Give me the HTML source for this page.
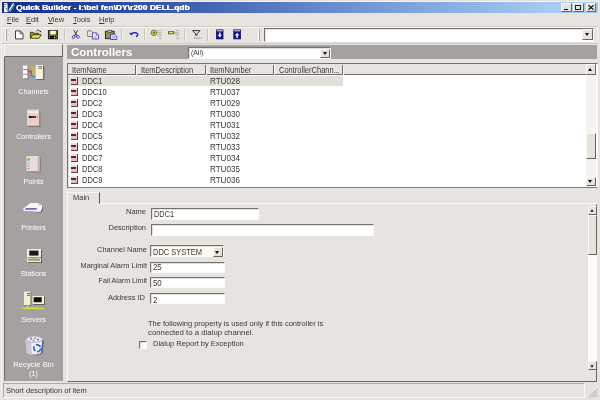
<!DOCTYPE html>
<html><head><meta charset="utf-8">
<style>
html,body{margin:0;padding:0;}
body{width:600px;height:400px;overflow:hidden;background:#e7e4df;position:relative;font-family:"Liberation Sans",sans-serif;font-size:7.9px;color:#383838;}
.a{position:absolute;}
.t{position:absolute;white-space:nowrap;line-height:10px;transform-origin:0 50%;transform:scaleX(.949);}
.sunk{position:absolute;background:#fff;box-sizing:border-box;border:1px solid;border-color:#75736e #fbfaf8 #fbfaf8 #75736e;box-shadow:inset 1px 1px 0 rgba(0,0,0,.12);}
.btn{position:absolute;background:#e6e3dd;box-sizing:border-box;border:1px solid;border-color:#fbfaf8 #66645f #66645f #fbfaf8;}
.arr{position:absolute;width:0;height:0;border-left:2.5px solid transparent;border-right:2.5px solid transparent;border-top:3px solid #111;}
.sep{position:absolute;width:1px;height:12px;top:29px;background:#c6c3bd;box-shadow:1px 0 0 #f7f6f3;}
.lbl{position:absolute;white-space:nowrap;line-height:10px;text-align:right;width:90px;transform-origin:100% 50%;transform:scaleX(.949);}
.row{position:absolute;left:82.2px;white-space:nowrap;line-height:10px;font-size:8.7px;transform-origin:0 50%;transform:scaleX(.865);}
.num{position:absolute;left:209.5px;white-space:nowrap;line-height:10px;font-size:8.7px;transform-origin:0 50%;transform:scaleX(.93);}
.ri{position:absolute;left:71.2px;width:7.3px;height:7.8px;background:linear-gradient(#f6e2de,#f0ccca 45%,#eab0bc);border-right:1px solid #4a3e3e;border-bottom:0.9px solid #5c4a4a;box-sizing:border-box;}
.ri:after{content:"";position:absolute;left:0.2px;width:5px;top:2.4px;height:1.5px;background:#45321c;}
.side{position:absolute;left:4px;width:59px;text-align:center;color:#fff;font-size:7.9px;line-height:10px;white-space:nowrap;transform:scaleX(.91);}
</style></head><body>
<div id="w" style="position:absolute;left:0;top:0;width:600px;height:400px;will-change:transform;filter:blur(0.3px);">

<!-- title bar -->
<div class="a" style="left:2.3px;top:2px;width:595.5px;height:10.7px;background:linear-gradient(90deg,#0e2c8e 0%,#3c5cb0 30%,#7299d6 62%,#a6caf0 92%,#a8ccf1 100%);"></div>
<svg class="a" style="left:3px;top:2px" width="13" height="11" viewBox="3 2 13 11"><rect x="4" y="3" width="3.6" height="9.3" fill="#f4f4f4"/><path d="M4.3 4.6h2M4.3 6.6h1.4M5.6 8.8h1.6" stroke="#444" stroke-width="0.8"/><path d="M7.6 3l2.2 3.2" stroke="#222a50" stroke-width="1.2"/><path d="M8.4 11.4l5.2-8" stroke="#e8f4f4" stroke-width="1.6"/><path d="M9.8 12l4.6-7" stroke="#38b8b0" stroke-width="1.2"/><path d="M8 9.6l1.6 2.2" stroke="#222" stroke-width="0.9"/></svg>
<div class="t" style="left:16.3px;top:2.7px;color:#fff;font-weight:bold;font-size:7.8px;transform:scaleX(1.086);text-shadow:0.3px 0 0 #fff;">Quick Builder - I:\bei fen\DY\r200 DELL.qdb</div>
<!-- caption buttons -->
<div class="btn" style="left:561.2px;top:3px;width:11.2px;height:8.6px;"></div>
<div class="a" style="left:563.7px;top:8.6px;width:4.2px;height:1.3px;background:#111;"></div>
<div class="btn" style="left:572.6px;top:3px;width:11.2px;height:8.6px;"></div>
<div class="a" style="left:575px;top:4.5px;width:6px;height:5.2px;border:0.7px solid #222;border-top-width:1.4px;box-sizing:border-box;"></div>
<div class="btn" style="left:585.6px;top:3px;width:10.8px;height:8.6px;"></div>
<svg class="a" style="left:587.9px;top:4.8px" width="6" height="5" viewBox="0 0 6 5"><path d="M0.5 0.3L5.5 4.7M5.5 0.3L0.5 4.7" stroke="#111" stroke-width="1.2"/></svg>

<div class="a" style="left:1px;top:1px;width:598px;height:1px;background:#f3f2ef;"></div>
<div class="a" style="left:1px;top:1px;width:1px;height:398px;background:#f3f2ef;"></div>
<div class="a" style="left:596.5px;top:27px;width:1px;height:15.5px;background:#f5f4f1;"></div>
<!-- menu -->
<div class="t" style="left:6.5px;top:14.5px;"><u>F</u>ile</div>
<div class="t" style="left:26px;top:14.5px;"><u>E</u>dit</div>
<div class="t" style="left:47.5px;top:14.5px;"><u>V</u>iew</div>
<div class="t" style="left:72.5px;top:14.5px;"><u>T</u>ools</div>
<div class="t" style="left:98.5px;top:14.5px;"><u>H</u>elp</div>
<div class="a" style="left:2px;top:26px;width:596px;height:1px;background:#d2cfc9;box-shadow:0 1px 0 #f7f6f3;"></div>

<!-- toolbar -->
<div class="a" style="left:5px;top:29px;width:1px;height:12px;background:#fbfaf8;box-shadow:1px 0 0 #a9a6a0;"></div>
<!-- toolbar icons -->
<svg class="a" style="left:0;top:26px" width="260" height="18" viewBox="0 26 260 18">
<!-- new -->
<path d="M15.5 30.9h4.7l2.8 2.6v5.4h-7.5z" fill="#fff" stroke="#2a2a2a" stroke-width="0.9"/><path d="M20 31.1v2.6h2.8" fill="none" stroke="#2a2a2a" stroke-width="0.7"/>
<!-- open -->
<path d="M30.4 38.3v-6h2.8l0.9 1h4.6v1.5" fill="#a09c10" stroke="#2a2a08" stroke-width="0.8"/>
<path d="M30.4 38.3l2.2-3.6h8.8l-2.4 3.6z" fill="#e2de48" stroke="#2a2a08" stroke-width="0.8"/>
<path d="M36.2 31.2c1-1.3 2.9-1.3 3.6-0.1" fill="none" stroke="#222" stroke-width="0.8"/><rect x="39.8" y="31" width="1.2" height="1.2" fill="#111"/>
<!-- save -->
<rect x="48.4" y="30.6" width="9" height="8.2" fill="#6a6a08" stroke="#1a1a06" stroke-width="0.9"/>
<rect x="50.2" y="30.8" width="5.6" height="3.6" fill="#f6f6f2"/>
<rect x="50" y="36" width="5.6" height="2.9" fill="#0c0c0c"/><rect x="54" y="36.8" width="1" height="1.6" fill="#e8e8e8"/>
<!-- cut -->
<path d="M73.8 30.3l3.2 5.6M77.6 30.3l-3.2 5.6" stroke="#222" stroke-width="0.9" fill="none"/>
<path d="M74.6 35.4l-1.8 0.6l-0.8 1.8l1.4 0.8l1.6-1z" fill="none" stroke="#3434c4" stroke-width="0.9"/>
<path d="M76.8 35.4l1.8 0.2l1 1.6l-1.4 1l-1.7-0.8z" fill="none" stroke="#3434c4" stroke-width="0.9"/>
<!-- copy -->
<path d="M87.7 30.9h3.4l1.5 1.5v4h-4.9z" fill="#fff" stroke="#555" stroke-width="0.8"/>
<path d="M92.4 32.9h4l2.2 2.1v4h-6.2z" fill="#fff" stroke="#2a2ab4" stroke-width="0.8"/>
<path d="M96.2 33.1v2.1h2.2" fill="none" stroke="#2a2ab4" stroke-width="0.6"/>
<path d="M89 33.3h2M89 35h2" stroke="#888" stroke-width="0.5"/><path d="M93.6 36h3.6M93.6 37.6h3.6" stroke="#667" stroke-width="0.5"/>
<!-- paste -->
<rect x="105.4" y="31.3" width="8.8" height="7.4" fill="#94923a" stroke="#222" stroke-width="0.9"/>
<rect x="107.8" y="30.2" width="4" height="2" fill="#d0cdc6" stroke="#333" stroke-width="0.6"/>
<path d="M110.6 34.3h4l2.2 2v3.2h-6.2z" fill="#eef0ff" stroke="#2a2ab4" stroke-width="0.8"/>
<path d="M111.8 36.6h3.6M111.8 38h3.6" stroke="#5a68b0" stroke-width="0.6"/>
<!-- undo -->
<path d="M131.5 34.2c1.2-1.8 4.6-2.2 5.8-0.6c0.9 1.2 0.2 2.6-1.2 3" fill="none" stroke="#1a1ac8" stroke-width="1.4"/>
<path d="M128.9 33l3.2-0.3l-0.3 3.1z" fill="#1a1ac8"/>
<!-- add -->
<path d="M157.6 30.7h4M156.4 32.8h5.2M157.6 34.8h4M158.8 38.6h2.8" stroke="#a9a6a1" stroke-width="0.9"/><path d="M158.8 36.7h2.8" stroke="#c4c1bc" stroke-width="0.8"/>
<circle cx="153.9" cy="32.8" r="2.7" fill="#ecea48" stroke="#3a3a10" stroke-width="0.7"/>
<path d="M152.5 32.8h2.8M153.9 31.4v2.8" stroke="#3a3a10" stroke-width="0.7"/>
<!-- remove -->
<path d="M175.4 30.7h3.8M174 32.8h5.2M175.4 34.8h3.8M176.4 38.6h2.8" stroke="#a9a6a1" stroke-width="0.9"/><path d="M176.4 36.7h2.8" stroke="#c4c1bc" stroke-width="0.8"/>
<rect x="168.6" y="31.7" width="5.2" height="2.1" fill="#ecea48" stroke="#3a3a10" stroke-width="0.7"/>
<!-- filter -->
<path d="M192.6 30.6h7.4l-2.8 3v1.6h-1.8v-1.6z" fill="#dfe3ea" stroke="#222" stroke-width="0.9"/>
<path d="M194 38h8" stroke="#777" stroke-width="1" stroke-dasharray="1 0.7"/>
<!-- down -->
<rect x="216.6" y="29.9" width="6.4" height="9" fill="#0c0ca4" stroke="#101040" stroke-width="0.8"/>
<rect x="217" y="30.3" width="5.6" height="1" fill="#e8e8f4"/>
<path d="M219.1 32.6h1.4v2.2h1.5l-2.2 2.6l-2.2-2.6h1.5z" fill="#fff"/>
<!-- up -->
<rect x="233.8" y="29.9" width="6.6" height="9" fill="#0c0ca4" stroke="#101040" stroke-width="0.8"/>
<rect x="234.2" y="30.3" width="5.8" height="1" fill="#e8e8f4"/>
<path d="M236.4 38h1.4v-2.6h1.5l-2.2-2.6l-2.2 2.6h1.5z" fill="#fff"/>
</svg>
<div class="sep" style="left:64px;"></div>
<div class="sep" style="left:121px;"></div>
<div class="sep" style="left:144px;"></div>
<div class="sep" style="left:184px;"></div>
<div class="sep" style="left:207px;"></div>
<div class="a" style="left:258px;top:29px;width:1px;height:12px;background:#fbfaf8;box-shadow:1px 0 0 #a9a6a0;"></div>
<div class="sunk" style="left:264px;top:27.6px;width:330px;height:14px;"></div>
<div class="btn" style="left:582.2px;top:28.8px;width:10.5px;height:11.2px;"></div>
<div class="arr" style="left:584.9px;top:33px;"></div>
<div class="a" style="left:2px;top:43px;width:596px;height:1px;background:#cdcac4;"></div>

<!-- left panel -->
<div class="a" style="left:4px;top:44px;width:59px;height:336.7px;background:#a4a1a0;border-left:1px solid #6f6d6a;box-sizing:border-box;"></div>
<div class="btn" style="left:4px;top:44px;width:59px;height:12.5px;background:#e7e4df;"></div>

<!-- banner -->
<div class="a" style="left:67px;top:44.7px;width:530px;height:14.3px;background:#a4a1a0;"></div>
<div class="t" style="transform:none;left:71px;top:45.5px;font-size:11.5px;font-weight:bold;color:#fff;line-height:12px;">Controllers</div>
<div class="sunk" style="left:187.7px;top:46.8px;width:143.5px;height:12.4px;"></div>
<div class="t" style="left:190.7px;top:48.2px;font-size:7.8px;transform:scaleX(.88);">(All)</div>
<div class="btn" style="left:320px;top:48.5px;width:10px;height:9px;"></div>
<div class="arr" style="left:322.5px;top:51.7px;"></div>

<!-- list -->
<div class="sunk" style="left:67px;top:63px;width:530.5px;height:124.7px;border-bottom-color:#807e7a;"></div>
<div class="a" style="left:68px;top:64px;width:518px;height:10.7px;background:#e7e4df;border-bottom:1px solid #6a6864;box-sizing:border-box;"></div>
<div class="a" style="left:134.5px;top:64.5px;width:1px;height:10px;background:#6a6864;box-shadow:1px 0 0 #fbfaf8;"></div>
<div class="a" style="left:204.5px;top:64.5px;width:1px;height:10px;background:#6a6864;box-shadow:1px 0 0 #fbfaf8;"></div>
<div class="a" style="left:273px;top:64.5px;width:1px;height:10px;background:#6a6864;box-shadow:1px 0 0 #fbfaf8;"></div>
<div class="a" style="left:342px;top:64.5px;width:1px;height:10px;background:#6a6864;box-shadow:1px 0 0 #fbfaf8;"></div>
<div class="t" style="left:71.5px;top:65px;font-size:8.3px;transform:scaleX(.905);">ItemName</div>
<div class="t" style="left:140.5px;top:65px;font-size:8.3px;transform:scaleX(.905);">ItemDescription</div>
<div class="t" style="left:210px;top:65px;font-size:8.3px;transform:scaleX(.905);">ItemNumber</div>
<div class="t" style="left:279px;top:65px;font-size:8.3px;transform:scaleX(.905);">ControllerChann...</div>
<div class="a" style="left:69px;top:75.7px;width:274px;height:10.3px;background:#e3e0da;"></div>

<div class="ri" style="top:77.1px"></div><div class="row" style="top:76.0px">DDC1</div><div class="num" style="top:76.0px">RTU028</div>
<div class="ri" style="top:88.1px"></div><div class="row" style="top:87.0px">DDC10</div><div class="num" style="top:87.0px">RTU037</div>
<div class="ri" style="top:99.1px"></div><div class="row" style="top:98.0px">DDC2</div><div class="num" style="top:98.0px">RTU029</div>
<div class="ri" style="top:110.1px"></div><div class="row" style="top:109.0px">DDC3</div><div class="num" style="top:109.0px">RTU030</div>
<div class="ri" style="top:121.1px"></div><div class="row" style="top:120.0px">DDC4</div><div class="num" style="top:120.0px">RTU031</div>
<div class="ri" style="top:132.1px"></div><div class="row" style="top:131.0px">DDC5</div><div class="num" style="top:131.0px">RTU032</div>
<div class="ri" style="top:143.1px"></div><div class="row" style="top:142.0px">DDC6</div><div class="num" style="top:142.0px">RTU033</div>
<div class="ri" style="top:154.1px"></div><div class="row" style="top:153.0px">DDC7</div><div class="num" style="top:153.0px">RTU034</div>
<div class="ri" style="top:165.1px"></div><div class="row" style="top:164.0px">DDC8</div><div class="num" style="top:164.0px">RTU035</div>
<div class="ri" style="top:176.1px"></div><div class="row" style="top:175.0px">DDC9</div><div class="num" style="top:175.0px">RTU036</div>

<!-- list scrollbar -->
<div class="a" style="left:585.5px;top:64px;width:10.7px;height:122.5px;background:#f6f4f1;"></div>
<div class="btn" style="left:585.5px;top:64px;width:10.7px;height:10.5px;"></div>
<div class="arr" style="left:588.3px;top:67.7px;transform:rotate(180deg);"></div>
<div class="btn" style="left:585.5px;top:133px;width:10.7px;height:26px;"></div>
<div class="btn" style="left:585.5px;top:176.7px;width:10.7px;height:9.8px;"></div>
<div class="arr" style="left:588.3px;top:180.2px;"></div>

<!-- tab -->
<div class="a" style="left:67px;top:203px;width:530px;height:1px;background:#f7f6f3;"></div>
<div class="a" style="left:67.3px;top:191.8px;width:32.7px;height:12.7px;background:#e7e4df;border:1px solid;border-color:#fbfaf8 #55534f transparent #fbfaf8;box-sizing:border-box;"></div>
<div class="t" style="left:73px;top:192.5px;">Main</div>

<div class="a" style="left:67.3px;top:204px;width:530px;height:177.5px;border:1px solid;border-color:transparent #6a6864 #6a6864 #fbfaf8;box-sizing:border-box;"></div>
<!-- form -->
<div class="lbl" style="left:55.7px;top:206.8px;">Name</div>
<div class="sunk" style="left:151px;top:208px;width:107.5px;height:12px;"></div>
<div class="t" style="left:154px;top:208.8px;font-size:8.7px;transform:scaleX(0.85);">DDC1</div>
<div class="lbl" style="left:55.7px;top:222.5px;">Description</div>
<div class="sunk" style="left:151px;top:223.7px;width:222.7px;height:12.3px;"></div>
<div class="lbl" style="left:57.4px;top:244.8px;">Channel Name</div>
<div class="sunk" style="left:150px;top:245.3px;width:74.3px;height:12.2px;background:#fdfcf4;"></div>
<div class="t" style="left:153px;top:246.5px;font-size:8.7px;transform:scaleX(0.86);">DDC SYSTEM</div>
<div class="btn" style="left:212.8px;top:246.8px;width:10px;height:9.8px;"></div>
<div class="arr" style="left:215.4px;top:250.5px;"></div>
<div class="lbl" style="left:56.7px;top:261px;transform:scaleX(.93);">Marginal Alarm Limit</div>
<div class="sunk" style="left:150px;top:261.6px;width:74.7px;height:11px;"></div>
<div class="t" style="left:152.8px;top:262.3px;font-size:8.7px;transform:scaleX(0.9);">25</div>
<div class="lbl" style="left:56.7px;top:275.8px;transform:scaleX(.897);">Fail Alarm Limit</div>
<div class="sunk" style="left:150px;top:277px;width:74.7px;height:11px;"></div>
<div class="t" style="left:152.8px;top:277.8px;font-size:8.7px;transform:scaleX(0.9);">50</div>
<div class="lbl" style="left:55.2px;top:293px;">Address ID</div>
<div class="sunk" style="left:150px;top:293.3px;width:74.7px;height:11.2px;"></div>
<div class="t" style="left:153px;top:294.5px;font-size:8.7px;transform:scaleX(0.9);">2</div>
<div class="t" style="left:147.5px;top:319px;">The following property is used only if this controller is</div>
<div class="t" style="left:147.5px;top:328px;transform:scaleX(.987);">connected to a dialup channel.</div>
<div class="sunk" style="left:139px;top:340.7px;width:8.3px;height:8.3px;"></div>
<div class="t" style="left:152.5px;top:339px;">Dialup Report by Exception</div>

<!-- form scrollbar -->
<div class="a" style="left:588px;top:206px;width:8.5px;height:164px;background:#fdfcfb;"></div>
<div class="btn" style="left:588px;top:206px;width:8.5px;height:9px;"></div>
<div class="arr" style="left:589.8px;top:209px;transform:rotate(180deg) scale(0.8);"></div>
<div class="btn" style="left:588px;top:215px;width:8.5px;height:40px;"></div>
<div class="btn" style="left:588px;top:361px;width:8.5px;height:9px;"></div>
<div class="arr" style="left:589.8px;top:364.5px;transform:scale(0.8);"></div>

<!-- side icons -->
<svg class="a" style="left:0;top:0" width="66" height="382" viewBox="0 0 66 382">
<defs><filter id="bl" x="-20%" y="-20%" width="140%" height="140%"><feGaussianBlur stdDeviation="0.45"/></filter></defs>
<g filter="url(#bl)">
<!-- channels -->
<rect x="36.3" y="65.8" width="8" height="14" fill="#5c5a58"/>
<rect x="23.8" y="66.3" width="4.6" height="13" fill="#6a6866"/>
<rect x="23" y="65.5" width="4.6" height="3.8" fill="#f6f6f6"/><rect x="23" y="70" width="4.6" height="3.8" fill="#f6f6f6"/><rect x="23" y="74.5" width="4.6" height="4" fill="#f6f6f6"/>
<rect x="35.5" y="65" width="7.6" height="14" fill="#f8f1dc"/>
<rect x="38.5" y="66.3" width="3.6" height="1" fill="#555"/><rect x="38.5" y="68.3" width="3.6" height="0.8" fill="#777"/>
<path d="M28 67.2h5v6.3h3" fill="none" stroke="#e6b820" stroke-width="1.3"/>
<path d="M28 71.5h3.2v3" fill="none" stroke="#e03a2a" stroke-width="1.3"/>
<path d="M28 75.6h3.5l1 1h3" fill="none" stroke="#2a9ad0" stroke-width="1.3"/>
<!-- controllers -->
<rect x="28" y="110.5" width="12.3" height="16.3" fill="#6e6b6a"/>
<rect x="27" y="109.5" width="12.3" height="16.3" fill="#e9cfc8"/>
<rect x="28.5" y="111.3" width="9.5" height="1.6" fill="#fbf3f0"/>
<rect x="28.8" y="116" width="7" height="2" fill="#1a1212"/>
<rect x="31.5" y="116.4" width="1.3" height="1.2" fill="#e03030"/><rect x="33.5" y="116.4" width="1.3" height="1.2" fill="#30b040"/>
<rect x="37" y="116" width="1" height="2" fill="#b08880"/>
<!-- points -->
<rect x="27.5" y="157" width="13.2" height="15.3" fill="#7b7877"/>
<rect x="26.5" y="156" width="13.2" height="15.3" fill="#e9dcd8"/>
<rect x="37.8" y="156" width="2" height="15.3" fill="#bfb0ac"/>
<circle cx="28.7" cy="159.6" r="1.5" fill="#4fe04a"/>
<rect x="27.8" y="162.6" width="1.6" height="1.3" fill="#a9a0c8"/><rect x="27.8" y="165.3" width="1.6" height="1.3" fill="#8f96c0"/><rect x="27.8" y="168" width="1.6" height="1.3" fill="#9a8f98"/>
<!-- printers -->
<path d="M24 211l17 1.8l2-2.5v-3l-18 0z" fill="#6b6870"/>
<path d="M30.3 203h8.2l1.5 1.5l2 0.7v3.5l-1.7 3.2l-16.3-1l-1-1.8z" fill="#f6f2fb"/>
<path d="M26 208h11l-0.8 1.8h-11.6z" fill="#7a60c4"/>
<path d="M38.5 203.3l1.2 2.7" stroke="#b8b0c8" stroke-width="0.7"/>
<!-- stations -->
<rect x="28" y="250" width="14" height="8.5" fill="#5a5855"/>
<rect x="27" y="249" width="14" height="8.5" fill="#f5eed4"/>
<rect x="29.3" y="250.6" width="9.2" height="5" fill="#1c1228"/>
<rect x="28" y="259" width="14" height="4" fill="#5a5855"/>
<rect x="27" y="258.3" width="14" height="3.8" fill="#f5eed4"/>
<rect x="28" y="259.5" width="12" height="0.9" fill="#4a3a30"/>
<rect x="31" y="257.5" width="6" height="0.8" fill="#8a8070"/>
<!-- servers -->
<rect x="24.8" y="292.3" width="6.5" height="13.5" fill="#66635f"/>
<rect x="24" y="291.5" width="6.5" height="13.5" fill="#f4eed6"/>
<rect x="27" y="293.2" width="3" height="0.9" fill="#444"/><rect x="27" y="295" width="3" height="0.9" fill="#666"/>
<rect x="33.3" y="296.8" width="11.5" height="8" fill="#55524e"/>
<rect x="32.5" y="296" width="11.5" height="8" fill="#f4eed6"/>
<rect x="33.7" y="297.2" width="8" height="5" fill="#0c0c10"/>
<rect x="27" y="305" width="1.4" height="3" fill="#dede3a"/>
<rect x="22.5" y="307.6" width="21.5" height="1.5" fill="#dede3a"/>
<!-- recycle bin -->
<path d="M27.5 341l1.5 13c3 2 10 2 13.5-0.5l1.5-13z" fill="#77747a"/>
<path d="M25.5 340l1.5 13c3 2.2 10.5 2.2 14.5-0.5l1.5-13z" fill="#f0eef8"/>
<path d="M25.5 340l1.5 13c1.5 1 3 1.5 5 1.7l-1-14z" fill="#c9c6e0"/>
<ellipse cx="34.3" cy="339.5" rx="8.8" ry="3.6" fill="#b9b6c4"/>
<ellipse cx="34.3" cy="339.3" rx="7.5" ry="2.8" fill="#e9e6ee"/>
<circle cx="31" cy="338.6" r="1.2" fill="#8a8aa0"/><circle cx="35" cy="338" r="1.1" fill="#c0a070"/><circle cx="38" cy="339.5" r="1.1" fill="#7a8ab0"/><circle cx="33.5" cy="340.5" r="1" fill="#9a9a9a"/>
<path d="M43 340.5l-1.5 12.3" stroke="#4e4b5e" stroke-width="1.1" fill="none"/>
<circle cx="37.2" cy="348.2" r="3.4" fill="none" stroke="#2a6ae0" stroke-width="1.7" stroke-dasharray="5.4 1.7"/>
<circle cx="37.2" cy="348.2" r="1.4" fill="#f4f6ff"/>
</g></svg>
<!-- side items -->
<div class="side" style="top:86.7px;">Channels</div>
<div class="side" style="top:131.7px;">Controllers</div>
<div class="side" style="top:177.0px;">Points</div>
<div class="side" style="top:222.7px;">Printers</div>
<div class="side" style="top:268.7px;">Stations</div>
<div class="side" style="top:314.7px;">Servers</div>
<div class="side" style="top:359.7px;transform:scaleX(.97);">Recycle Bin</div>
<div class="side" style="top:368.7px;">(1)</div>

<!-- status bar -->
<div class="a" style="left:2.5px;top:383px;width:582.5px;height:14.7px;border:1px solid;border-color:#aeaba5 #fbfaf8 #fbfaf8 #aeaba5;box-sizing:border-box;"></div>
<div class="t" style="left:5.5px;top:385.5px;">Short description of item</div>
<svg class="a" style="left:588px;top:388px" width="10" height="10" viewBox="0 0 10 10"><path d="M9.5 1L1 9.5M9.5 4L4 9.5M9.5 7L7 9.5" stroke="#a8a5a0" stroke-width="1"/></svg>
</div>
</body></html>
